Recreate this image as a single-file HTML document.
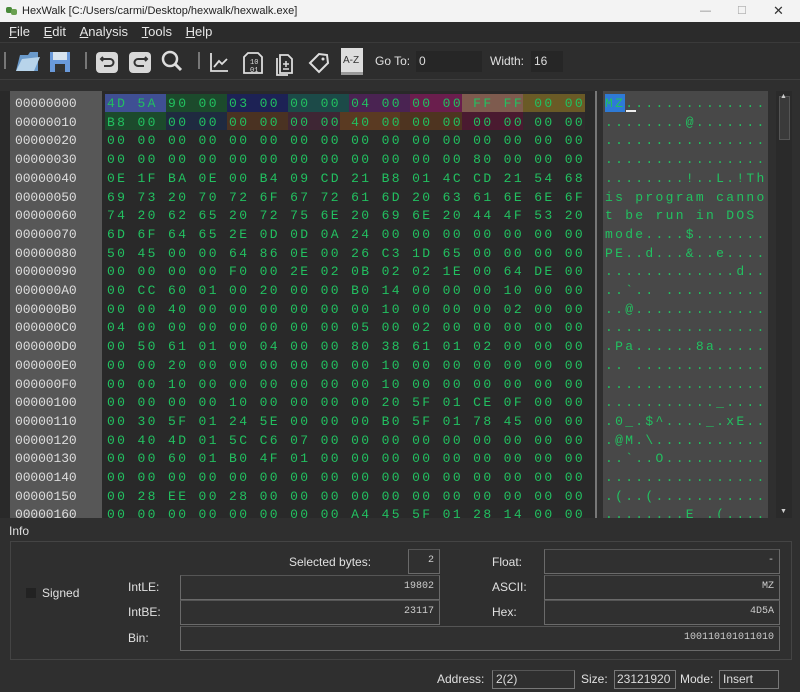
<!DOCTYPE html>
<html><head><meta charset="utf-8"><style>
*{margin:0;padding:0;box-sizing:border-box}
body{width:800px;height:692px;background:#2f2f2f;font-family:"Liberation Sans",sans-serif;color:#ddd;position:relative;overflow:hidden}
.abs{position:absolute}
.title{left:0;top:0;width:800px;height:22px;background:#f3f3f3;color:#222;font-size:11px;line-height:22px;padding-left:22px}
.menu{left:0;top:22px;width:800px;height:20px;background:#2b2b2b;font-size:13px;line-height:20px;color:#e6e6e6}
.menu span{margin-left:9px;margin-right:1px}
.tb{left:0;top:42px;width:800px;height:38px;background:#2d2d2d;border-top:1px solid #3a3a3a;border-bottom:1px solid #3e3e3e}
.inp{background:#262626;color:#ddd;font-size:12px;line-height:20px;padding-left:3px}
.hex{left:0;top:91px;width:595px;height:427px;background:#292929}
.addr{left:10px;top:91px;width:92px;height:427px;background:#575757}
.mono{font-family:"Liberation Mono",monospace;font-size:13px;white-space:pre}
.addrtxt{left:15px;top:95px;color:#ddd;line-height:18.7px;letter-spacing:-0.1px}
.hx{left:107px;top:95px;line-height:18.7px;letter-spacing:2.37px;color:#22c060}
.asc{left:603px;top:91px;width:165px;height:427px;background:#484848}
.asctxt{left:605px;top:95px;line-height:18.7px;letter-spacing:2.3px;color:#22c060}
.c{position:absolute;height:18px}
.lbl{font-size:12px;color:#e0e0e0}
.box{position:absolute;border:1px solid #6a6a6a;border-top-color:#555;background:#303030;font-family:"Liberation Mono",monospace;font-size:10px;color:#ccc;text-align:right;padding-right:5px;line-height:22px}
</style></head><body>
<div class="abs title"><span style="position:absolute;left:6px;top:7px;width:6px;height:6px;background:#4a8a3a;border-radius:2px"></span><span style="position:absolute;left:11px;top:9px;width:6px;height:6px;background:#6aa050;border-radius:2px"></span>HexWalk [C:/Users/carmi/Desktop/hexwalk/hexwalk.exe]
<span style="position:absolute;left:700px;color:#888">—</span><span style="position:absolute;left:737px;color:#aaa">☐</span><span style="position:absolute;left:773px;color:#333;font-size:13px">✕</span></div>
<div class="abs menu"><span><u>F</u>ile</span> <span><u>E</u>dit</span> <span><u>A</u>nalysis</span> <span><u>T</u>ools</span> <span><u>H</u>elp</span></div>
<div class="abs tb">
<svg width="380" height="36" style="position:absolute;left:0;top:0">
<g fill="#777"><rect x="4" y="9" width="2" height="17"/><rect x="85" y="9" width="2" height="17"/><rect x="198" y="9" width="2" height="17"/></g>
<path d="M16 28 L20 12 L28 12 L30 9 L38 9 L38 28Z" fill="#6a9acb"/><path d="M16 28 L22 16 L40 14 L34 28Z" fill="#b8d4ea"/>
<rect x="50" y="9" width="20" height="20" fill="#6a9adb"/><rect x="53" y="9" width="14" height="8" fill="#d8e4f0"/><rect x="55" y="21" width="10" height="8" fill="#333"/>
<rect x="96" y="9" width="22" height="21" rx="4" fill="#d8d8d8"/><path d="M103 14 L101 16 L103 18 M101 16 H110 A3.5 3.5 0 0 1 110 23 H104" stroke="#333" stroke-width="2" fill="none"/>
<rect x="129" y="9" width="22" height="21" rx="4" fill="#d8d8d8"/><path d="M145 14 L147 16 L145 18 M147 16 H138 A3.5 3.5 0 0 0 138 23 H144" stroke="#333" stroke-width="2" fill="none"/>
<circle cx="170" cy="16" r="7" stroke="#ddd" stroke-width="2.5" fill="none"/><path d="M175 21 L181 27" stroke="#ddd" stroke-width="3"/>
<path d="M211 10 V28 H228 M214 24 L219 18 L222 21 L227 16" stroke="#ddd" stroke-width="1.8" fill="none"/>
<path d="M248 10 H258 L262 14 V30 H244 V14Z" stroke="#ddd" stroke-width="1.8" fill="none"/><text x="250" y="21" font-size="7" fill="#ddd" font-family="Liberation Mono">10</text><text x="250" y="29" font-size="7" fill="#ddd" font-family="Liberation Mono">01</text>
<path d="M280 12 H288 L292 16 V30 H280Z M277 15 V32 H288" stroke="#ddd" stroke-width="1.8" fill="none"/><path d="M283 21 H289 M286 18 V24 M283 26 H289" stroke="#ddd" stroke-width="1.5"/>
<path d="M310 20 L319 11 L327 12 L328 20 L319 29Z" stroke="#ddd" stroke-width="2" fill="none"/><circle cx="323" cy="16" r="1.5" fill="#ddd"/>
<rect x="341" y="5" width="22" height="24" fill="#ddd"/><rect x="341" y="29" width="22" height="3" fill="#999"/><text x="343" y="20" font-size="10" fill="#333" font-family="Liberation Sans">A-Z</text>
</svg>
<span class="lbl abs" style="left:375px;top:11px">Go To:</span>
<div class="abs inp" style="left:416px;top:8px;width:66px;height:21px">0</div>
<span class="lbl abs" style="left:490px;top:11px">Width:</span>
<div class="abs inp" style="left:531px;top:8px;width:32px;height:21px">16</div>
</div>

<div class="abs hex"></div>
<div class="abs addr"></div>
<div class="abs" style="left:595px;top:91px;width:2px;height:427px;background:#777"></div>
<div class="abs asc"></div>
<div class="abs" style="left:776px;top:91px;width:16px;height:427px;background:#2a2a2a"></div>
<div class="abs" style="left:779px;top:96px;width:11px;height:44px;background:#3a3a3a;border:1px solid #555"></div>
<div class="abs" style="left:780px;top:93px;font-size:7px;color:#ccc">▲</div>
<div class="abs" style="left:780px;top:508px;font-size:7px;color:#ccc">▼</div>

<div class="c" style="left:105px;top:94px;width:61px;background:#3f4f93"></div>
<div class="c" style="left:166px;top:94px;width:61px;background:#1c4a2c"></div>
<div class="c" style="left:227px;top:94px;width:61px;background:#1d2255"></div>
<div class="c" style="left:288px;top:94px;width:61px;background:#1c4a48"></div>
<div class="c" style="left:349px;top:94px;width:61px;background:#4a2352"></div>
<div class="c" style="left:410px;top:94px;width:52px;background:#6a1e4d"></div>
<div class="c" style="left:462px;top:94px;width:61px;background:#7e5b4e"></div>
<div class="c" style="left:523px;top:94px;width:62px;background:#6a5a26"></div>
<div class="c" style="left:105px;top:112px;width:61px;background:#1c4a2c"></div>
<div class="c" style="left:166px;top:112px;width:61px;background:#1f2a40"></div>
<div class="c" style="left:227px;top:112px;width:61px;background:#4a3222"></div>
<div class="c" style="left:288px;top:112px;width:61px;background:#3e2634"></div>
<div class="c" style="left:340px;top:112px;width:69px;background:#5a3a22"></div>
<div class="c" style="left:400px;top:112px;width:62px;background:#4e3420"></div>
<div class="c" style="left:462px;top:112px;width:61px;background:#4a1a30"></div>
<div class="c" style="left:523px;top:112px;width:62px;background:#2f2a2c"></div>
<div class="c" style="left:605px;top:94px;width:20px;background:#2e7ad6"></div>
<div class="c" style="left:626px;top:110px;width:10px;height:2px;background:#eee"></div>

<div class="abs mono addrtxt">00000000
00000010
00000020
00000030
00000040
00000050
00000060
00000070
00000080
00000090
000000A0
000000B0
000000C0
000000D0
000000E0
000000F0
00000100
00000110
00000120
00000130
00000140
00000150
00000160</div>
<div class="abs mono hx" style="height:423px;overflow:hidden">4D 5A 90 00 03 00 00 00 04 00 00 00 FF FF 00 00
B8 00 00 00 00 00 00 00 40 00 00 00 00 00 00 00
00 00 00 00 00 00 00 00 00 00 00 00 00 00 00 00
00 00 00 00 00 00 00 00 00 00 00 00 80 00 00 00
0E 1F BA 0E 00 B4 09 CD 21 B8 01 4C CD 21 54 68
69 73 20 70 72 6F 67 72 61 6D 20 63 61 6E 6E 6F
74 20 62 65 20 72 75 6E 20 69 6E 20 44 4F 53 20
6D 6F 64 65 2E 0D 0D 0A 24 00 00 00 00 00 00 00
50 45 00 00 64 86 0E 00 26 C3 1D 65 00 00 00 00
00 00 00 00 F0 00 2E 02 0B 02 02 1E 00 64 DE 00
00 CC 60 01 00 20 00 00 B0 14 00 00 00 10 00 00
00 00 40 00 00 00 00 00 00 10 00 00 00 02 00 00
04 00 00 00 00 00 00 00 05 00 02 00 00 00 00 00
00 50 61 01 00 04 00 00 80 38 61 01 02 00 00 00
00 00 20 00 00 00 00 00 00 10 00 00 00 00 00 00
00 00 10 00 00 00 00 00 00 10 00 00 00 00 00 00
00 00 00 00 10 00 00 00 00 20 5F 01 CE 0F 00 00
00 30 5F 01 24 5E 00 00 00 B0 5F 01 78 45 00 00
00 40 4D 01 5C C6 07 00 00 00 00 00 00 00 00 00
00 00 60 01 B0 4F 01 00 00 00 00 00 00 00 00 00
00 00 00 00 00 00 00 00 00 00 00 00 00 00 00 00
00 28 EE 00 28 00 00 00 00 00 00 00 00 00 00 00
00 00 00 00 00 00 00 00 A4 45 5F 01 28 14 00 00</div>
<div class="abs mono asctxt" style="height:423px;overflow:hidden">MZ..............
........@.......
................
................
........!..L.!Th
is program canno
t be run in DOS 
mode....$.......
PE..d...&..e....
.............d..
..`.. ..........
..@.............
................
.Pa......8a.....
.. .............
................
..........._....
.0_.$^...._.xE..
.@M.\...........
..`..O..........
................
.(..(...........
........E_.(....</div>

<div class="abs lbl" style="left:9px;top:524px">Info</div>
<div class="abs" style="left:10px;top:541px;width:782px;height:119px;border:1px solid #444"></div>
<div class="abs" style="left:26px;top:588px;width:10px;height:10px;background:#222"></div>
<div class="abs lbl" style="left:42px;top:586px">Signed</div>
<div class="abs lbl" style="left:289px;top:555px">Selected bytes:</div>
<div class="box" style="left:408px;top:549px;width:32px;height:25px">2</div>
<div class="abs lbl" style="left:492px;top:555px">Float:</div>
<div class="box" style="left:544px;top:549px;width:236px;height:25px">-</div>
<div class="abs lbl" style="left:128px;top:580px">IntLE:</div>
<div class="box" style="left:180px;top:575px;width:260px;height:25px">19802</div>
<div class="abs lbl" style="left:492px;top:580px">ASCII:</div>
<div class="box" style="left:544px;top:575px;width:236px;height:25px">MZ</div>
<div class="abs lbl" style="left:128px;top:605px">IntBE:</div>
<div class="box" style="left:180px;top:600px;width:260px;height:25px">23117</div>
<div class="abs lbl" style="left:492px;top:605px">Hex:</div>
<div class="box" style="left:544px;top:600px;width:236px;height:25px">4D5A</div>
<div class="abs lbl" style="left:128px;top:631px">Bin:</div>
<div class="box" style="left:180px;top:626px;width:600px;height:25px">100110101011010</div>

<div class="abs lbl" style="left:437px;top:672px">Address:</div>
<div class="abs" style="left:492px;top:670px;width:83px;height:19px;border:1px solid #777;border-top-color:#555;font-size:12px;padding-left:3px;line-height:17px">2(2)</div>
<div class="abs lbl" style="left:581px;top:672px">Size:</div>
<div class="abs" style="left:614px;top:670px;width:62px;height:19px;border:1px solid #777;font-size:12px;padding-left:2px;line-height:17px">23121920</div>
<div class="abs lbl" style="left:680px;top:672px">Mode:</div>
<div class="abs" style="left:719px;top:670px;width:60px;height:19px;border:1px solid #777;font-size:12px;padding-left:3px;line-height:17px">Insert</div>
</body></html>
